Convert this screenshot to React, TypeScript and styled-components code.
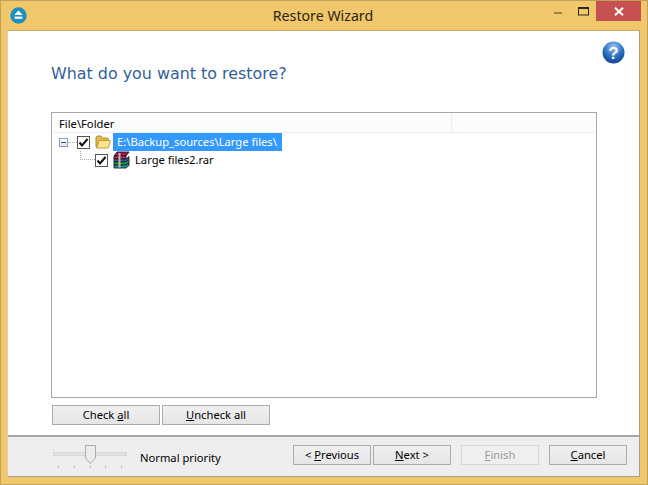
import React from 'react';
import styled, {createGlobalStyle} from 'styled-components';

const GlobalStyle = createGlobalStyle`
  html, body {
    margin: 0;
    padding: 0;
    background: #f0c76a;
  }
`;

const Window = styled.div`
  width: 648px;
  height: 485px;
  box-sizing: border-box;
  display: flex;
  flex-direction: column;
  background: #f0c76a;
  border: 1px solid #bfa35c;
  border-bottom-color: #c4a862;
  font-family: "Noto Sans", "Open Sans", sans-serif;
  font-size: 11.2px;
  color: #000;
  overflow: hidden;
`;

const TitleBar = styled.div`
  height: 29px;
  flex: none;
  display: grid;
  grid-template-columns: 1fr auto 1fr;
  align-items: start;
`;

const AppIcon = styled.svg`
  display: block;
  margin: 6px 0 0 9px;
`;

const Title = styled.div`
  font-size: 14.2px;
  line-height: 29px;
  color: #2b2413;
  padding-right: 2px;
`;

const WindowControls = styled.div`
  display: flex;
  justify-content: flex-end;
  align-items: flex-start;
  margin-right: 6px;
`;

const ControlButton = styled.div<{$width: number}>`
  width: ${p => p.$width}px;
  height: 20px;
  display: flex;
  align-items: center;
  justify-content: center;
`;

const CloseButton = styled(ControlButton)`
  background: #c75050;
`;

const Client = styled.div`
  flex: 1;
  margin: 0 7px 7px 6px;
  display: flex;
  flex-direction: column;
  background: #fff;
  border: 1px solid #a79f8c;
  border-top-color: #c8ab60;
  border-left-color: #d9cfa8;
  min-height: 0;
`;

const Content = styled.div`
  flex: 1;
  display: flex;
  flex-direction: column;
  padding: 0 42px 10px 43px;
  min-height: 0;
`;

const HelpRow = styled.div`
  display: flex;
  justify-content: flex-end;
  height: 33px;
  padding-top: 10px;
  margin-right: -28px;
  box-sizing: border-box;
  flex: none;
`;

const Heading = styled.h1`
  margin: 0 0 28px;
  font-family: "DejaVu Sans", sans-serif;
  font-size: 15.9px;
  line-height: 20px;
  height: 20px;
  font-weight: 400;
  color: #33609a;
`;

const TreeBox = styled.div`
  flex: 1;
  border: 1px solid #a8a8a8;
  min-height: 0;
  display: flex;
  flex-direction: column;
`;

const TreeHeader = styled.div`
  height: 19px;
  flex: none;
  display: flex;
  background: #fcfcfc;
  border-bottom: 1px solid #e6eefb;
`;

const HeaderCell = styled.div<{$grow?: boolean}>`
  ${p => p.$grow ? 'flex: 1;' : 'width: 392px; border-right: 1px solid #e6eefb;'}
  padding-left: 7px;
  line-height: 21px;
`;

const TreeRow = styled.div<{$indent: number}>`
  height: 18px;
  display: flex;
  align-items: center;
  padding-left: ${p => p.$indent}px;
`;

const Expander = styled.div`
  width: 9px;
  height: 9px;
  box-sizing: border-box;
  border: 1px solid #8e9fb8;
  background: linear-gradient(#fff, #dfe5ee);
  display: flex;
  align-items: center;
  justify-content: center;
  &::before {
    content: "";
    width: 5px;
    height: 1px;
    background: #2f4f80;
  }
`;

const DottedH = styled.div<{$width: number}>`
  width: ${p => p.$width}px;
  height: 0;
  border-top: 1px dotted #aaa;
`;

const Elbow = styled.div`
  width: 15px;
  height: 9px;
  box-sizing: border-box;
  margin: -9px 0 0 0;
  border-left: 1px dotted #aaa;
  border-bottom: 1px dotted #aaa;
`;

const CheckBox = styled.div<{$gap: number}>`
  width: 13px;
  height: 13px;
  box-sizing: border-box;
  border: 1px solid #555;
  background: #fff;
  margin-right: ${p => p.$gap}px;
  display: flex;
  align-items: center;
  justify-content: center;
  flex: none;
`;

const TreeLabel = styled.div<{$selected?: boolean}>`
  height: 18px;
  line-height: 18px;
  box-sizing: border-box;
  padding: 0 4px;
  margin-left: ${p => p.$selected ? 2 : 5}px;
  ${p => p.$selected && 'background: #3399ff; color: #fff; width: 169px; white-space: nowrap;'}
  ${p => !p.$selected && 'padding-left: 0;'}
`;

const ListButtons = styled.div`
  display: flex;
  gap: 2px;
  padding: 7px 0 0 1px;
  flex: none;
`;

const Button = styled.div<{$width: number; $disabled?: boolean}>`
  width: ${p => p.$width}px;
  height: 20px;
  box-sizing: border-box;
  border: 1px solid ${p => p.$disabled ? '#d5d5d5' : '#acacac'};
  background: ${p => p.$disabled ? '#efefef' : 'linear-gradient(#f0f0f0, #e5e5e5)'};
  color: ${p => p.$disabled ? '#9a9a9a' : '#000'};
  text-align: center;
  line-height: 18px;
  white-space: nowrap;
`;

const Footer = styled.div`
  height: 41px;
  flex: none;
  box-sizing: border-box;
  border-top: 2px solid #a8a8a8;
  background: #eeeeee;
  display: flex;
  align-items: flex-start;
  padding: 8px 12px 0 45px;
`;

const Slider = styled.div`
  width: 74px;
  height: 28px;
  position: relative;
  flex: none;
`;

const SliderTrack = styled.div`
  height: 4px;
  margin-top: 7px;
  background: #e3e5e3;
  border: 1px solid #d6d8d6;
  box-sizing: border-box;
`;

const SliderTicks = styled.div`
  display: flex;
  justify-content: space-between;
  padding: 0 5px;
  margin-top: 10px;
`;

const Tick = styled.div`
  width: 1px;
  height: 2px;
  background: #b5b5b5;
`;

const SliderThumb = styled.svg`
  position: absolute;
  left: 32px;
  top: 0;
`;

const PriorityLabel = styled.div`
  margin-left: 13px;
  line-height: 26px;
  width: 153px;
  flex: none;
`;

const WizardButtons = styled.div`
  display: flex;
`;

const Spaced = styled.div<{$left: number}>`
  margin-left: ${p => p.$left}px;
`;

const Check = () => (
  <svg width="11" height="11" viewBox="0 0 11 11">
    <path d="M1.5 5.5 L4 8.5 L9.5 2" fill="none" stroke="#111" strokeWidth="2" />
  </svg>
);

const FolderIcon = () => (
  <svg width="16" height="14" viewBox="0 0 16 14">
    <path d="M1 3 Q1 1 3 1 H6 L7.5 3 H12 Q13.5 3 13.5 4.5 V6 H4 L2 12.5 H2 Q1 12.5 1 11 Z" fill="#e2bb52" stroke="#b08a2c" />
    <path d="M4 5.5 H15 Q15.6 5.5 15.4 6.2 L13.4 12.4 Q13.2 13 12.6 13 H1.6 Z" fill="#fde58e" stroke="#c19a35" />
  </svg>
);

const RarIcon = () => (
  <svg width="17" height="18" viewBox="0 0 17 18">
    <path d="M1 5 L4 1 H16 L13 5 Z" fill="#a3195b" stroke="#1c1c1c" strokeWidth="0.9" />
    <path d="M1 5 H13 V8 H1 Z" fill="#c2286e" stroke="#1c1c1c" strokeWidth="0.9" />
    <path d="M1 8 H13 L16 5.5 V8.5 L13 11 H1 Z" fill="#2b55b5" stroke="#1c1c1c" strokeWidth="0.9" />
    <path d="M1 11 H13 L16 8.5 V11.5 L13 14 H1 Z" fill="#27a04a" stroke="#1c1c1c" strokeWidth="0.9" />
    <path d="M1 14 H13 L16 11.5 V14.5 L13 17 H1 Z" fill="#1f8f9a" stroke="#1c1c1c" strokeWidth="0.9" />
    <rect x="5.5" y="2" width="2" height="14.5" fill="#e8dfa0" opacity="0.8" />
  </svg>
);

const App = () => (
  <>
    <GlobalStyle />
    <Window>
      <TitleBar>
        <AppIcon width="17" height="17" viewBox="0 0 17 17">
          <circle cx="8.5" cy="8.5" r="8.2" fill="#1d8fbd" />
          <path d="M8.5 3.6 L12.6 8 H4.4 Z" fill="#fff" />
          <rect x="4.6" y="9.6" width="7.8" height="2.2" fill="#fff" />
        </AppIcon>
        <Title>Restore Wizard</Title>
        <WindowControls>
          <ControlButton $width={26}>
            <svg width="10" height="12" viewBox="0 0 10 12">
              <rect x="1" y="7" width="8" height="2" fill="#9c8650" />
            </svg>
          </ControlButton>
          <ControlButton $width={25}>
            <svg width="11" height="9" viewBox="0 0 11 9">
              <rect x="0.5" y="0.5" width="10" height="7.5" fill="none" stroke="#2a2a2a" />
              <rect x="0.5" y="0.5" width="10" height="1.5" fill="#2a2a2a" />
            </svg>
          </ControlButton>
          <CloseButton $width={45}>
            <svg width="10" height="9" viewBox="0 0 10 9">
              <path d="M1 0.8 L9 8.2 M9 0.8 L1 8.2" stroke="#fff" strokeWidth="2" />
            </svg>
          </CloseButton>
        </WindowControls>
      </TitleBar>
      <Client>
        <Content>
          <HelpRow>
            <svg width="23" height="23" viewBox="0 0 23 23">
              <defs>
                <radialGradient id="helpBall" cx="50%" cy="25%" r="80%">
                  <stop offset="0" stopColor="#9cc4ee" />
                  <stop offset="0.55" stopColor="#2a6fc0" />
                  <stop offset="1" stopColor="#123f8c" />
                </radialGradient>
              </defs>
              <circle cx="11.5" cy="11.5" r="11" fill="url(#helpBall)" />
              <text x="11.5" y="17.5" textAnchor="middle" fontFamily="'Liberation Sans', sans-serif" fontWeight="700" fontSize="17" fill="#fff">?</text>
            </svg>
          </HelpRow>
          <Heading>What do you want to restore?</Heading>
          <TreeBox>
            <TreeHeader>
              <HeaderCell>File\Folder</HeaderCell>
              <HeaderCell $grow />
            </TreeHeader>
            <TreeRow $indent={7}>
              <Expander />
              <DottedH $width={9} />
              <CheckBox $gap={5}><Check /></CheckBox>
              <FolderIcon />
              <TreeLabel $selected>E:\Backup_sources\Large files\</TreeLabel>
            </TreeRow>
            <TreeRow $indent={28}>
              <Elbow />
              <CheckBox $gap={5}><Check /></CheckBox>
              <RarIcon />
              <TreeLabel>Large files2.rar</TreeLabel>
            </TreeRow>
          </TreeBox>
          <ListButtons>
            <Button $width={108}>Check <u>a</u>ll</Button>
            <Button $width={108}><u>U</u>ncheck all</Button>
          </ListButtons>
        </Content>
        <Footer>
          <Slider>
            <SliderTrack />
            <SliderTicks>
              <Tick /><Tick /><Tick /><Tick /><Tick />
            </SliderTicks>
            <SliderThumb width="11" height="19" viewBox="0 0 11 19">
              <path d="M0.5 0.5 H10.5 V13 L5.5 18.5 L0.5 13 Z" fill="#ececec" stroke="#acacac" />
            </SliderThumb>
          </Slider>
          <PriorityLabel>Normal priority</PriorityLabel>
          <WizardButtons>
            <Button $width={78}>&lt; <u>P</u>revious</Button>
            <Spaced $left={2}><Button $width={78}><u>N</u>ext &gt;</Button></Spaced>
            <Spaced $left={10}><Button $width={78} $disabled><u>F</u>inish</Button></Spaced>
            <Spaced $left={10}><Button $width={78}><u>C</u>ancel</Button></Spaced>
          </WizardButtons>
        </Footer>
      </Client>
    </Window>
  </>
);

export default App;
